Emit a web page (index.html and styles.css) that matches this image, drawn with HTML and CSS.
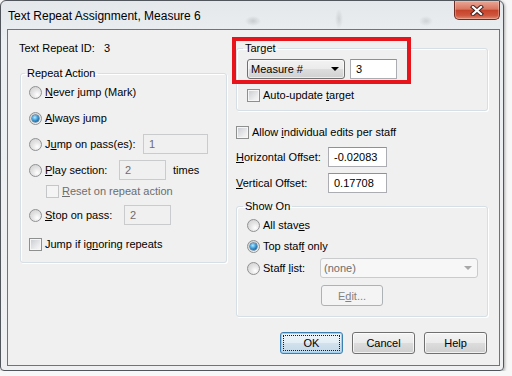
FILE: index.html
```html
<!DOCTYPE html>
<html lang="en">
<head>
    <meta charset="UTF-8">
    <title>Text Repeat Assignment, Measure 6</title>
    <link rel="stylesheet" href="styles.css">
</head>
<body>
    <div class="window">
        <div class="titlebar">
            <span class="title">Text Repeat Assignment, Measure 6</span>
            <button class="close-btn">
                <svg width="14" height="11" viewBox="0 0 14 11">
                    <path d="M3 2L11 9M11 2L3 9" stroke="#3d2626" stroke-width="4.2" stroke-linecap="square" fill="none"/>
                    <path d="M3 2L11 9M11 2L3 9" stroke="#ffffff" stroke-width="2.2" stroke-linecap="square" fill="none"/>
                </svg>
            </button>
        </div>
        <div class="client">
            <div class="columns">
                <div class="col-left">
                    <div class="id-row"><span class="id-label">Text Repeat ID:</span>3</div>
                    <fieldset class="group group-repeat">
                        <legend>Repeat Action</legend>
                        <div class="row"><span class="radio"></span><span><u>N</u>ever jump (Mark)</span></div>
                        <div class="row"><span class="radio checked"></span><span><u>A</u>lways jump</span></div>
                        <div class="row">
                            <span class="radio"></span><span class="lbl lbl-jump">J<u>u</u>mp on pass(es):</span>
                            <input class="field field-wide" type="text" value="1" disabled>
                        </div>
                        <div class="row">
                            <span class="radio"></span><span class="lbl lbl-play"><u>P</u>lay section:</span>
                            <input class="field field-small" type="text" value="2" disabled>
                            <span class="times">times</span>
                        </div>
                        <div class="row row-sub">
                            <span class="check disabled"></span><span class="dim"><u>R</u>eset on repeat action</span>
                        </div>
                        <div class="row row-after-sub">
                            <span class="radio"></span><span class="lbl lbl-stop"><u>S</u>top on pass:</span>
                            <input class="field field-small" type="text" value="2" disabled>
                        </div>
                        <div class="row row-gap-lg">
                            <span class="check"></span><span>Jump if ig<u>n</u>oring repeats</span>
                        </div>
                    </fieldset>
                </div>
                <div class="col-right">
                    <fieldset class="group group-target">
                        <legend>Target</legend>
                        <div class="row">
                            <div class="combo">Measure #<span class="arrow"></span></div>
                            <input class="field field-target" type="text" value="3">
                        </div>
                        <div class="row row-check">
                            <span class="check"></span><span>Auto-update <u>t</u>arget</span>
                        </div>
                    </fieldset>
                    <div class="row row-allow">
                        <span class="check"></span><span>Allow <u>i</u>ndividual edits per staff</span>
                    </div>
                    <div class="row row-offset">
                        <span class="lbl lbl-offset"><u>H</u>orizontal Offset:</span>
                        <input class="field field-offset" type="text" value="-0.02083">
                    </div>
                    <div class="row row-offset">
                        <span class="lbl lbl-offset"><u>V</u>ertical Offset:</span>
                        <input class="field field-offset" type="text" value="0.17708">
                    </div>
                    <fieldset class="group group-show">
                        <legend>Show On</legend>
                        <div class="row"><span class="radio"></span><span>All stav<u>e</u>s</span></div>
                        <div class="row row-tight"><span class="radio checked"></span><span>Top staf<u>f</u> only</span></div>
                        <div class="row row-staff">
                            <span class="radio"></span><span class="lbl lbl-staff">Staff <u>l</u>ist:</span>
                            <div class="combo combo-disabled">(none)<span class="arrow"></span></div>
                        </div>
                        <div class="row row-edit">
                            <button class="btn btn-disabled">E<u>d</u>it...</button>
                        </div>
                    </fieldset>
                </div>
            </div>
            <div class="buttons">
                <button class="btn btn-default">OK</button>
                <button class="btn">Cancel</button>
                <button class="btn">Help</button>
            </div>
        </div>
    </div>
    <div class="callout"></div>
</body>
</html>
```

FILE: styles.css
```css
body {
    margin: 0;
    background: #f7f7f7;
    font-family: "Liberation Sans", Arial, sans-serif;
    font-size: 11px;
    color: #000;
}
u {
    text-decoration-thickness: 1px;
    text-underline-offset: 1px;
}
.window {
    width: 504px;
    height: 371px;
    box-sizing: border-box;
    border: 1px solid #50565c;
    border-radius: 6px 6px 4px 4px;
    padding: 0 3px 4px 6px;
    display: flex;
    flex-direction: column;
    background:
        radial-gradient(ellipse 8px 5px at 252px 20px, rgba(60, 60, 60, 0.18), transparent),
        radial-gradient(ellipse 4px 10px at 338px 18px, rgba(60, 60, 60, 0.14), transparent),
        radial-gradient(ellipse 7px 5px at 425px 20px, rgba(60, 60, 60, 0.14), transparent),
        linear-gradient(#e4e8eb, #eceff1 40px, #eef0f1);
    box-shadow: 1px 1px 3px rgba(0, 0, 0, 0.3);
}
.titlebar {
    height: 28px;
    display: flex;
    justify-content: space-between;
    align-items: flex-start;
}
.title {
    font-size: 12px;
    line-height: 14px;
    margin: 8px 0 0 1px;
}
.close-btn {
    width: 46px;
    height: 19px;
    padding: 0;
    border: 1px solid #6d2c24;
    border-top: none;
    border-radius: 0 0 5px 5px;
    background: linear-gradient(#e9a797, #d9775f 45%, #c5432b 52%, #cf563d 80%, #df8a72);
    box-shadow: inset 0 0 0 1px rgba(255, 220, 210, 0.35);
    display: flex;
    align-items: center;
    justify-content: center;
}
.client {
    flex: 1;
    border: 1px solid #6f7479;
    background: #f0f0f0;
    padding: 11px 11px 0 12px;
}
.columns {
    display: flex;
    gap: 9px;
    align-items: flex-start;
}
.col-left {
    width: 207px;
}
.col-right {
    width: 252px;
}
.id-row {
    height: 14px;
    line-height: 14px;
    margin-left: -1px;
}
.id-label {
    display: inline-block;
    width: 85px;
}
.group {
    margin: 0;
    border: 1px solid #d5dfe5;
    border-radius: 3px;
    min-width: 0;
    box-shadow: inset 1px 1px 0 #fff, 1px 1px 0 #fff;
}
.group legend {
    padding: 0 2px;
    margin-left: -4px;
    line-height: 14px;
    height: 14px;
}
.group-repeat {
    margin-top: 11px;
    padding: 2px 8px 8px 8px;
}
.group-target {
    padding: 4px 9px 6px 10px;
}
.group-show {
    margin-top: 6px;
    padding: 2px 9px 10px 10px;
}
.row {
    display: flex;
    align-items: center;
    height: 20px;
}
.row + .row {
    margin-top: 6px;
}
.row-sub {
    height: 18px;
    padding-left: 17px;
}
.row + .row-sub {
    margin-top: 2px;
}
.row + .row-after-sub {
    margin-top: 5px;
}
.row + .row-gap-lg {
    margin-top: 9px;
}
.row + .row-check {
    margin-top: 7px;
    height: 18px;
}
.row-allow {
    margin-top: 12px;
    height: 18px;
}
.row + .row-tight {
    margin-top: 1px;
}
.row + .row-staff {
    margin-top: 2px;
}
.row + .row-edit {
    margin-top: 7px;
    height: 21px;
    padding-left: 74px;
}
.radio {
    flex: none;
    position: relative;
    width: 13px;
    height: 13px;
    box-sizing: border-box;
    margin-right: 3px;
    border: 1px solid #8f9193;
    border-radius: 50%;
    background: radial-gradient(circle at 65% 70%, #ffffff, #e4e4e4 45%, #cdcdcd);
}
.radio.checked::after {
    content: "";
    position: absolute;
    left: 2px;
    top: 2px;
    width: 7px;
    height: 7px;
    border-radius: 50%;
    background: radial-gradient(circle at 40% 35%, #b6eaff, #3d9fdc 45%, #16568a 80%);
    box-shadow: 0 0 0 0.5px #1c4e78;
}
.check {
    flex: none;
    width: 13px;
    height: 13px;
    box-sizing: border-box;
    margin-right: 3px;
    border: 1px solid #8e8f8f;
    background: linear-gradient(135deg, #c6cacf, #eeeeef 70%, #f8f8f8);
    box-shadow: inset 0 0 0 1px #f6f6f6;
}
.check.disabled {
    border-color: #c4c6c8;
    background: #f4f4f4;
    box-shadow: none;
}
.dim {
    color: #6d6d6d;
}
.lbl {
    flex: none;
}
.lbl-jump {
    width: 98px;
}
.lbl-play {
    width: 74px;
}
.lbl-stop {
    width: 79px;
}
.lbl-offset {
    width: 92px;
}
.lbl-staff {
    width: 57px;
}
.times {
    margin-left: 7px;
}
.field {
    box-sizing: border-box;
    height: 20px;
    margin: 0;
    padding: 0 5px;
    border: 1px solid #abadb3;
    border-top-color: #8e9197;
    background: #fff;
    font: inherit;
    color: #000;
    outline: none;
}
.field:disabled {
    border-color: #c9cbcd;
    background: #f0f0f0;
    color: #6d6d6d;
}
.field-wide {
    width: 65px;
}
.field-small {
    width: 47px;
}
.field-target {
    width: 47px;
    margin-left: 5px;
}
.field-offset {
    width: 59px;
}
.combo {
    position: relative;
    box-sizing: border-box;
    width: 98px;
    height: 20px;
    line-height: 18px;
    padding-left: 3px;
    border: 1px solid #707070;
    border-radius: 3px;
    background: linear-gradient(#f3f3f3, #ebebeb 50%, #dedede 50%, #d0d0d0);
    box-shadow: inset 0 0 0 1px rgba(255, 255, 255, 0.6);
}
.arrow {
    position: absolute;
    right: 5px;
    top: 7px;
    width: 0;
    height: 0;
    border-left: 4px solid transparent;
    border-right: 4px solid transparent;
    border-top: 4px solid #000;
}
.combo-disabled {
    width: 158px;
    border-color: #c9cbcd;
    background: #f7f7f7;
    box-shadow: none;
    color: #6d6d6d;
}
.combo-disabled .arrow {
    border-top-color: #a8a8a8;
}
.buttons {
    display: flex;
    justify-content: flex-end;
    gap: 9px;
    margin-top: 15px;
    padding-right: 1px;
}
.btn {
    box-sizing: border-box;
    width: 63px;
    height: 22px;
    padding: 0;
    border: 1px solid #707070;
    border-radius: 3px;
    background: linear-gradient(#f3f3f3, #ebebeb 50%, #dddddd 50%, #cfcfcf);
    box-shadow: inset 0 0 0 1px rgba(255, 255, 255, 0.7);
    font: inherit;
    color: #000;
}
.btn-default {
    position: relative;
    border-color: #3c7fb1;
    background: linear-gradient(#eef5fa, #e2edf5 50%, #d2e2ee 50%, #c4d8e8);
    box-shadow: inset 0 0 0 1px #9fd0f0;
}
.btn-default::after {
    content: "";
    position: absolute;
    inset: 2px;
    border: 1px dotted #1a1a1a;
}
.btn-disabled {
    width: 62px;
    height: 21px;
    border-color: #adb2b5;
    background: #f4f4f4;
    box-shadow: none;
    color: #838383;
}
.callout {
    position: absolute;
    left: 232px;
    top: 37px;
    width: 179px;
    height: 47px;
    box-sizing: border-box;
    border: 4px solid #e8141c;
}
```
